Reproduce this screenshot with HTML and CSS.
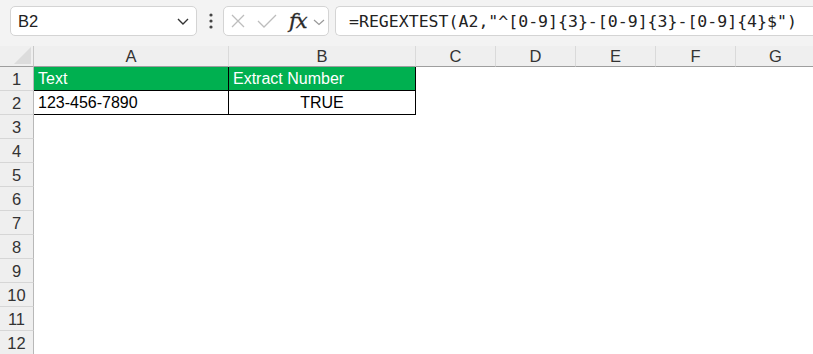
FILE: index.html
```html
<!DOCTYPE html>
<html lang="en">
<head>
    <meta charset="UTF-8">
    <meta name="viewport" content="width=device-width, initial-scale=1.0">
    <title>REGEXTEST</title>
    <link rel="stylesheet" href="styles.css">
</head>
<body>
    <div class="toolbar">
        <div class="namebox">
            <span class="cellref">B2</span>
            <svg class="chev" width="14" height="10" viewBox="0 0 14 10"><polyline points="2,2 7,7 12,2" fill="none" stroke="#333" stroke-width="1.4"/></svg>
        </div>
        <svg class="dots" width="6" height="16" viewBox="0 0 6 16"><circle cx="3" cy="2" r="1.6" fill="#444"/><circle cx="3" cy="8" r="1.6" fill="#444"/><circle cx="3" cy="14" r="1.6" fill="#444"/></svg>
        <div class="fbuttons">
            <svg class="icon-x" width="14" height="16" viewBox="0 0 14 16"><path d="M1 2 L13 14 M13 2 L1 14" stroke="#bdbdbd" stroke-width="1.3" fill="none"/></svg>
            <svg class="icon-ok" width="20" height="16" viewBox="0 0 20 16"><polyline points="1,8 7,14 19,2" stroke="#bdbdbd" stroke-width="1.3" fill="none"/></svg>
            <span class="fx">fx</span>
            <svg class="icon-dd" width="12" height="8" viewBox="0 0 12 8"><polyline points="1,2 6,6.5 11,2" fill="none" stroke="#999" stroke-width="1.2"/></svg>
        </div>
        <div class="formula">=REGEXTEST(A2,"^[0-9]{3}-[0-9]{3}-[0-9]{4}$")</div>
    </div>

    <div class="sheet">
        <div class="corner"><span class="tri"></span></div>
        <div class="colhead">A</div>
        <div class="colhead">B</div>
        <div class="colhead">C</div>
        <div class="colhead">D</div>
        <div class="colhead">E</div>
        <div class="colhead">F</div>
        <div class="colhead">G</div>

        <div class="rowhead">1</div>
        <div class="cell head bl">Text</div>
        <div class="cell head br">Extract Number</div>
        <div class="cell"></div><div class="cell"></div><div class="cell"></div><div class="cell"></div><div class="cell"></div>

        <div class="rowhead">2</div>
        <div class="cell data bl">123-456-7890</div>
        <div class="cell data br center">TRUE</div>
        <div class="cell"></div><div class="cell"></div><div class="cell"></div><div class="cell"></div><div class="cell"></div>
    </div>
    <div class="sheet rest" id="rest"></div>

    <script>
        const rest = document.getElementById('rest');
        for (let r = 3; r <= 12; r++) {
            const h = document.createElement('div');
            h.className = 'rowhead';
            h.innerText = r;
            rest.appendChild(h);
            for (let c = 0; c < 7; c++) {
                const cell = document.createElement('div');
                cell.className = 'cell';
                rest.appendChild(cell);
            }
        }
    </script>
</body>
</html>
```

FILE: styles.css
```css
* {
    box-sizing: border-box;
}
body {
    margin: 0;
    background: #fff;
    font-family: 'Liberation Sans', Arial, sans-serif;
    color: #222;
    overflow: hidden;
}
.toolbar {
    height: 46px;
    background: #f3f3f3;
    display: flex;
    align-items: flex-start;
    padding: 6px 0 0 10px;
}
.namebox {
    width: 187px;
    height: 30px;
    background: #fff;
    border: 1px solid #d4d4d4;
    border-radius: 5px;
    display: flex;
    align-items: center;
    justify-content: space-between;
    padding: 0 6px 0 7px;
    font-size: 16.5px;
}
.chev {
    margin-top: 2px;
}
.dots {
    margin: 7px 0 0 11px;
}
.fbuttons {
    margin-left: 9px;
    width: 106px;
    height: 30px;
    background: #fff;
    border: 1px solid #d4d4d4;
    border-radius: 5px;
    display: flex;
    align-items: center;
    padding-left: 7px;
}
.icon-ok {
    margin-left: 12px;
}
.fx {
    font-family: 'DejaVu Serif', 'Liberation Serif', serif;
    font-style: italic;
    font-size: 21px;
    color: #2a2a2a;
    margin-left: 12px;
    line-height: 1;
    letter-spacing: -1px;
    -webkit-text-stroke: 0.3px #2a2a2a;
}
.icon-dd {
    margin-left: 6px;
    margin-top: 2px;
}
.formula {
    margin-left: 6px;
    flex: 1;
    height: 30px;
    background: #fff;
    border: 1px solid #d4d4d4;
    border-right: none;
    border-radius: 5px 0 0 5px;
    display: flex;
    align-items: center;
    padding-left: 13px;
    font-family: 'DejaVu Sans Mono', 'Liberation Mono', monospace;
    font-size: 16.55px;
    color: #222;
    white-space: nowrap;
}
.sheet {
    display: grid;
    grid-template-columns: 34px 195px 187px repeat(5, 80px);
    grid-template-rows: 21px;
    grid-auto-rows: 24px;
    font-size: 16px;
}
.corner {
    background: #efefef;
    border-right: 1px solid #c8c8c8;
    border-bottom: 1px solid #9e9e9e;
    position: relative;
}
.tri {
    position: absolute;
    right: 2px;
    bottom: 2px;
    width: 0;
    height: 0;
    border-left: 17px solid transparent;
    border-bottom: 17px solid #dcdcdc;
}
.colhead {
    background: #efefef;
    border-right: 1px solid #dadada;
    border-bottom: 1px solid #9e9e9e;
    display: flex;
    justify-content: center;
    align-items: center;
    font-size: 16.5px;
    color: #333;
    padding-top: 1px;
}
.rowhead {
    background: #efefef;
    border-right: 1px solid #b8b8b8;
    border-bottom: 1px solid #d6d6d6;
    display: flex;
    justify-content: center;
    align-items: center;
    font-size: 16.5px;
    color: #333;
    padding-top: 1px;
}
.cell {
    display: flex;
    align-items: flex-end;
    padding: 0 0 2px 4px;
    white-space: nowrap;
}
.cell.head {
    background: #00b050;
    color: #fff;
    border-bottom: 1px solid #000;
}
.cell.data {
    border-bottom: 1px solid #000;
    color: #000;
}
.cell.bl,
.cell.br {
    border-right: 1px solid #000;
}
.cell.center {
    justify-content: center;
    padding-left: 0;
}
.rest {
    grid-template-rows: none;
}
```
